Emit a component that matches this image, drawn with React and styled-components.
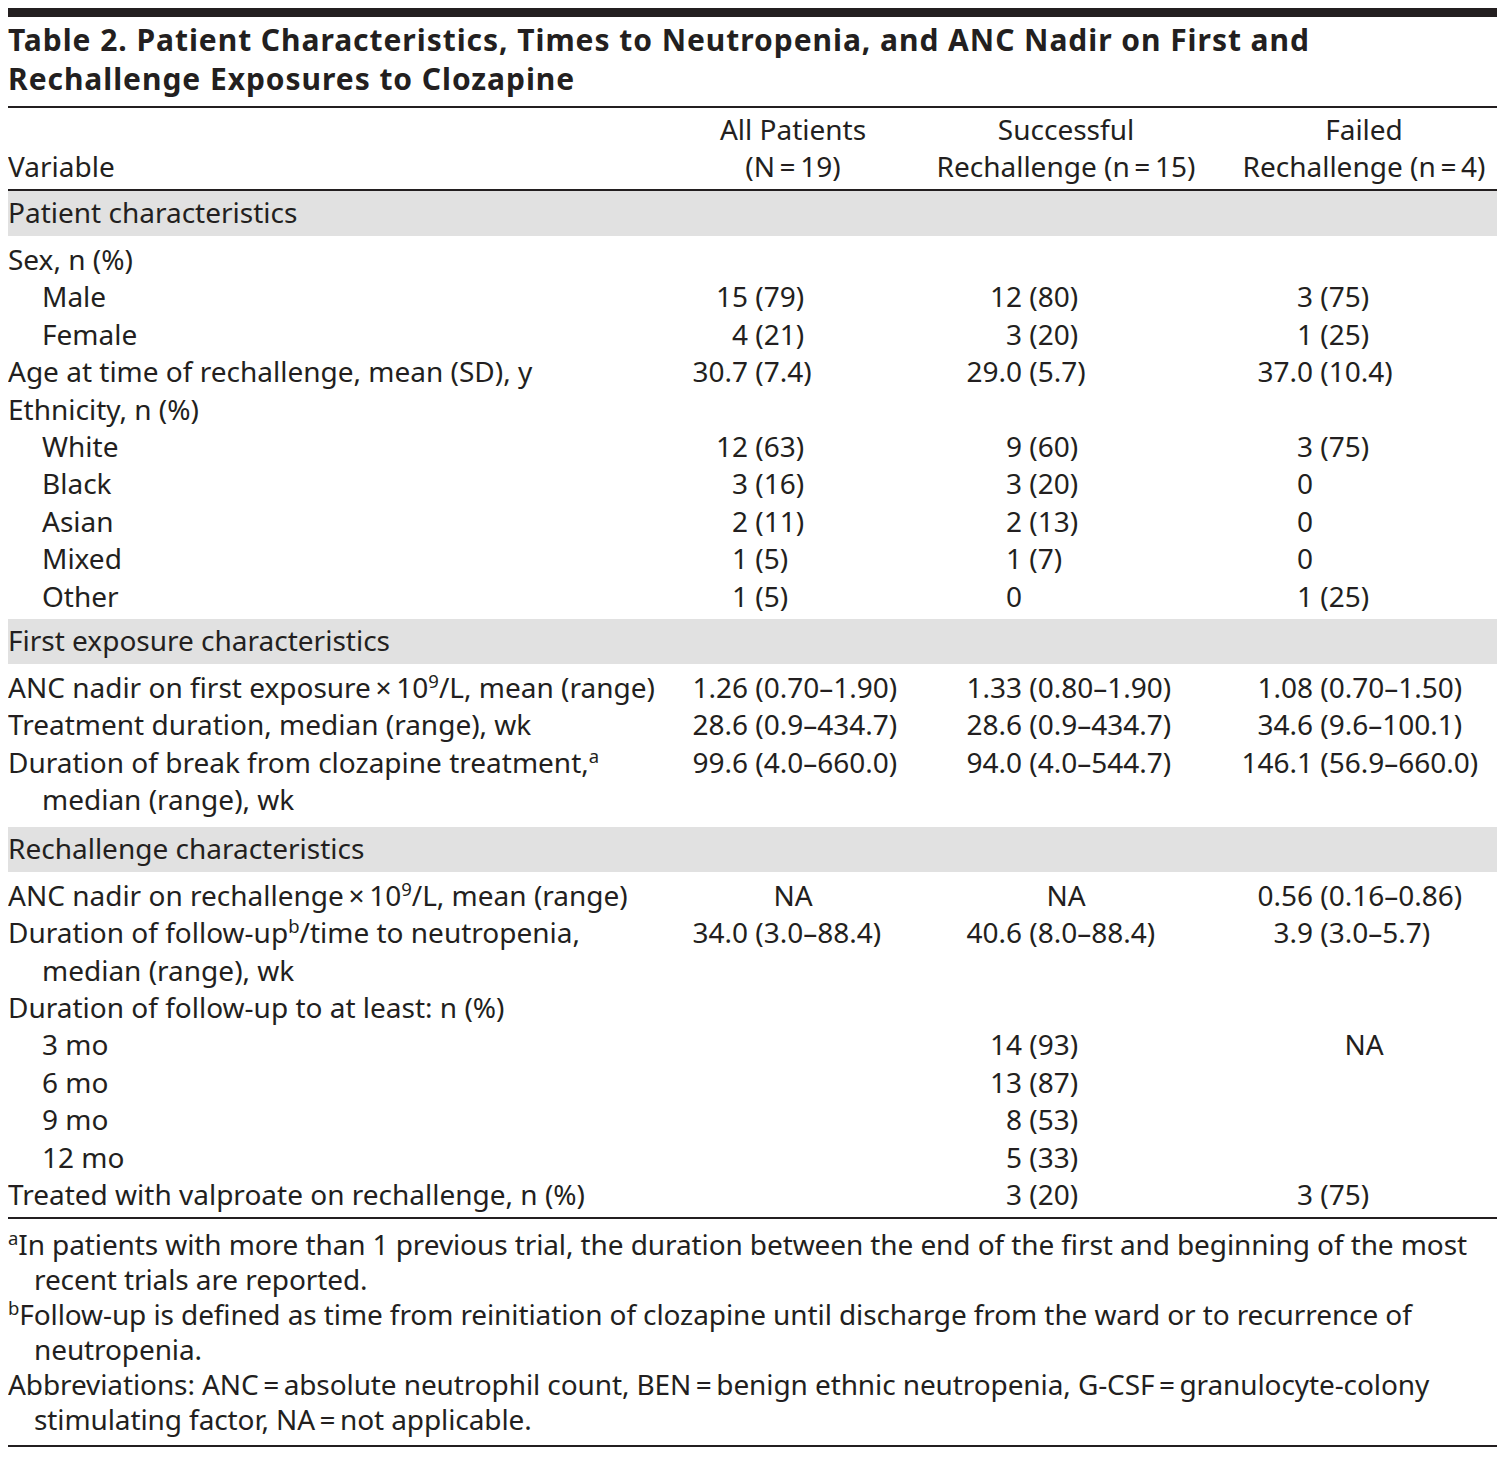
import React from 'react';
import styled, { createGlobalStyle } from 'styled-components';

const INK = '#231f20';
const FONT = `"Noto Sans", "Open Sans", "Liberation Sans", sans-serif`;
const COLS = '677px 216px 330px 1fr';
const LEAD_W = [63, 121, 82];

const GlobalStyle = createGlobalStyle`
  html, body { background: #fff; }
  body { margin: 8px; }
`;

const Page = styled.div`
  width: 1489px;
  font-family: ${FONT};
  font-stretch: semi-condensed;
  font-size: 28px;
  color: ${INK};
`;

const TopRule = styled.div`
  height: 9px;
  background: ${INK};
`;

const Title = styled.h1`
  margin: 0;
  padding: 3px 0 8px;
  font-size: 30px;
  font-weight: 700;
  letter-spacing: 0.95px;
  line-height: 39px;
  white-space: nowrap;
  border-bottom: 2px solid ${INK};
`;

const HeaderRow = styled.div`
  display: grid;
  grid-template-columns: ${COLS};
  align-items: end;
  line-height: 37px;
  padding: 3px 0 4px;
  border-bottom: 2px solid ${INK};
`;

const HeadCell = styled.div`
  text-align: ${(p) => (p.$left ? 'left' : 'center')};
  white-space: nowrap;
`;

const Band = styled.div`
  background: #e1e1e1;
  height: 45px;
  line-height: 42px;
  white-space: nowrap;
`;

const Section = styled.div`
  padding: 5px 0 ${(p) => p.$pb}px;
`;

const Row = styled.div`
  display: grid;
  grid-template-columns: ${COLS};
  line-height: 37.4px;
`;

const LabelLine = styled.div`
  padding-left: ${(p) => (p.$indent ? 34 : 0)}px;
  white-space: nowrap;
`;

const ValueCell = styled.div`
  display: flex;
  white-space: pre;
`;

const Lead = styled.span`
  flex: 0 0 ${(p) => p.$w}px;
  display: flex;
  justify-content: flex-end;
`;

const CenterCell = styled.div`
  text-align: center;
`;

const Sup = styled.sup`
  font-size: 0.66em;
  line-height: 0;
  vertical-align: 0.55em;
`;

const Notes = styled.div`
  border-top: 2px solid ${INK};
  border-bottom: 2px solid ${INK};
  padding: 8px 0 8px;
`;

const Note = styled.p`
  margin: 0;
  padding-left: 26px;
  text-indent: -26px;
  line-height: 35px;
  letter-spacing: -0.1px;
  white-space: nowrap;
`;

const T = '\u2009';

const sections = [
  {
    band: 'Patient characteristics',
    pb: 4,
    rows: [
      { label: ['Sex, n (%)'] },
      { label: ['Male'], indent: true, v: ['15 (79)', '12 (80)', '3 (75)'] },
      { label: ['Female'], indent: true, v: ['4 (21)', '3 (20)', '1 (25)'] },
      { label: ['Age at time of rechallenge, mean (SD), y'], v: ['30.7 (7.4)', '29.0 (5.7)', '37.0 (10.4)'] },
      { label: ['Ethnicity, n (%)'] },
      { label: ['White'], indent: true, v: ['12 (63)', '9 (60)', '3 (75)'] },
      { label: ['Black'], indent: true, v: ['3 (16)', '3 (20)', '0'] },
      { label: ['Asian'], indent: true, v: ['2 (11)', '2 (13)', '0'] },
      { label: ['Mixed'], indent: true, v: ['1 (5)', '1 (7)', '0'] },
      { label: ['Other'], indent: true, v: ['1 (5)', '0', '1 (25)'] },
    ],
  },
  {
    band: 'First exposure characteristics',
    pb: 8,
    rows: [
      {
        label: [
          <>ANC nadir on first exposure{T}×{T}10<Sup>9</Sup>/L, mean (range)</>,
        ],
        v: ['1.26 (0.70–1.90)', '1.33 (0.80–1.90)', '1.08 (0.70–1.50)'],
      },
      { label: ['Treatment duration, median (range), wk'], v: ['28.6 (0.9–434.7)', '28.6 (0.9–434.7)', '34.6 (9.6–100.1)'] },
      {
        label: [<>Duration of break from clozapine treatment,<Sup>a</Sup></>, 'median (range), wk'],
        v: ['99.6 (4.0–660.0)', '94.0 (4.0–544.7)', '146.1 (56.9–660.0)'],
      },
    ],
  },
  {
    band: 'Rechallenge characteristics',
    pb: 4,
    rows: [
      {
        label: [<>ANC nadir on rechallenge{T}×{T}10<Sup>9</Sup>/L, mean (range)</>],
        v: ['NA', 'NA', '0.56 (0.16–0.86)'],
      },
      {
        label: [<>Duration of follow-up<Sup>b</Sup>/time to neutropenia,</>, 'median (range), wk'],
        v: ['34.0 (3.0–88.4)', '40.6 (8.0–88.4)', '3.9 (3.0–5.7)'],
      },
      { label: ['Duration of follow-up to at least: n (%)'] },
      { label: ['3 mo'], indent: true, v: ['', '14 (93)', 'NA'] },
      { label: ['6 mo'], indent: true, v: ['', '13 (87)', ''] },
      { label: ['9 mo'], indent: true, v: ['', '8 (53)', ''] },
      { label: ['12 mo'], indent: true, v: ['', '5 (33)', ''] },
      { label: ['Treated with valproate on rechallenge, n (%)'], v: ['', '3 (20)', '3 (75)'] },
    ],
  },
];

function Value({ text, col }) {
  if (!text) return <div />;
  if (text === 'NA') return <CenterCell>NA</CenterCell>;
  const i = text.indexOf(' (');
  const lead = i === -1 ? text : text.slice(0, i);
  const rest = i === -1 ? '' : text.slice(i);
  return (
    <ValueCell>
      <Lead $w={LEAD_W[col]}>{lead}</Lead>
      {rest && <span>{rest}</span>}
    </ValueCell>
  );
}

export default function App() {
  return (
    <>
      <GlobalStyle />
      <Page>
        <TopRule />
        <Title>
          Table 2. Patient Characteristics, Times to Neutropenia, and ANC Nadir on First and
          <br />
          Rechallenge Exposures to Clozapine
        </Title>
        <HeaderRow>
          <HeadCell $left>Variable</HeadCell>
          <HeadCell>
            All Patients
            <br />
            (N{T}={T}19)
          </HeadCell>
          <HeadCell>
            Successful
            <br />
            Rechallenge (n{T}={T}15)
          </HeadCell>
          <HeadCell>
            Failed
            <br />
            Rechallenge (n{T}={T}4)
          </HeadCell>
        </HeaderRow>
        {sections.map((s) => (
          <React.Fragment key={s.band}>
            <Band>{s.band}</Band>
            <Section $pb={s.pb}>
              {s.rows.map((r, ri) => (
                <Row key={ri}>
                  <div>
                    {r.label.map((l, li) => (
                      <LabelLine key={li} $indent={r.indent || li > 0}>
                        {l}
                      </LabelLine>
                    ))}
                  </div>
                  {[0, 1, 2].map((c) => (
                    <Value key={c} col={c} text={r.v ? r.v[c] : ''} />
                  ))}
                </Row>
              ))}
            </Section>
          </React.Fragment>
        ))}
        <Notes>
          <Note>
            <Sup>a</Sup>In patients with more than 1 previous trial, the duration between the end of the first and beginning of the most
            <br />
            recent trials are reported.
          </Note>
          <Note>
            <Sup>b</Sup>Follow-up is defined as time from reinitiation of clozapine until discharge from the ward or to recurrence of
            <br />
            neutropenia.
          </Note>
          <Note>
            Abbreviations: ANC{T}={T}absolute neutrophil count, BEN{T}={T}benign ethnic neutropenia, G-CSF{T}={T}granulocyte-colony
            <br />
            stimulating factor, NA{T}={T}not applicable.
          </Note>
        </Notes>
      </Page>
    </>
  );
}
